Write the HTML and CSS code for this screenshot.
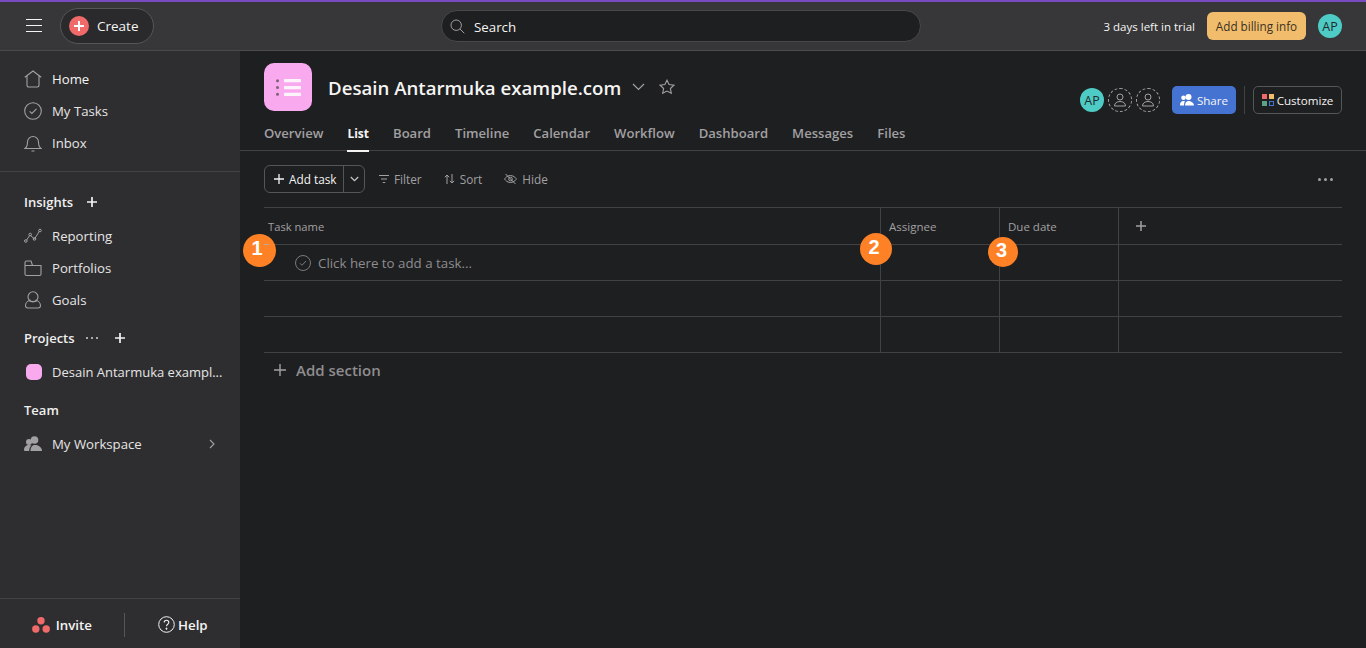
FILE: index.html
```html
<!DOCTYPE html>
<html lang="en">
<head>
<meta charset="utf-8">
<title>Desain Antarmuka example.com</title>
<link rel="stylesheet" href="styles.css">
</head>
<body>
<div class="app">
  <header class="topbar">
    <div class="top-left">
      <button class="burger" aria-label="Menu"><svg width="16" height="14" viewBox="0 0 16 14"><path d="M0 .5h16M0 6.500h16M0 12.500h16" stroke="#f5f4f3" fill="none"/></svg></button>
      <div class="create"><span class="create-dot"><svg width="10" height="10" viewBox="0 0 10 10"><path d="M5 0v10M0 5h10" stroke="#fff" stroke-width="2"/></svg></span><span>Create</span></div>
    </div>
    <div class="search">
      <svg width="15" height="15" viewBox="0 0 15 15" fill="none" stroke="#a2a0a2" stroke-width="1"><circle cx="6.200" cy="6.200" r="5.200"/><path d="M10 10l4.300 4.300"/></svg>
      <span>Search</span>
    </div>
    <div class="top-right">
      <span class="trial">3 days left in trial</span>
      <span class="billing">Add billing info</span>
      <span class="avatar">AP</span>
    </div>
  </header>
  <div class="body">
    <aside class="sidebar">
      <nav class="nav-main">
        <a class="nav-item"><svg class="ico" viewBox="0 0 18 18" fill="none" stroke="#a2a0a2" stroke-width="1.100"><path d="M.8 7.200 9 1l8.200 6.200M3 6v9.300a1.700 1.700 0 0 0 1.700 1.700h8.600a1.700 1.700 0 0 0 1.700-1.700V6"/></svg><span>Home</span></a>
        <a class="nav-item"><svg class="ico" viewBox="0 0 18 18" fill="none" stroke="#a2a0a2" stroke-width="1.100"><circle cx="9" cy="9" r="8.300"/><path d="M5.600 9.300 7.900 11.500 12.500 6.800"/></svg><span>My Tasks</span></a>
        <a class="nav-item"><svg class="ico" viewBox="0 0 18 18" fill="none" stroke="#a2a0a2" stroke-width="1.100"><path d="M1 14.500c2-1.500 2.500-3 2.500-6.500a5.500 5.500 0 0 1 11 0c0 3.500.5 5 2.500 6.500zM7.500 17h3"/></svg><span>Inbox</span></a>
      </nav>
      <div class="side-rule"></div>
      <div class="side-head first"><b>Insights</b><svg class="plus" width="10" height="10" viewBox="0 0 10 10"><path d="M5 0v10M0 5h10" stroke="#f5f4f3" stroke-width="1.700"/></svg></div>
      <a class="nav-item"><svg class="ico" viewBox="0 0 18 18" fill="none" stroke="#a2a0a2" stroke-width="1"><path d="M2.300 13.500 6 8l4.500 4L15.500 4"/><circle cx="1.800" cy="14" r="1.300"/><circle cx="6.200" cy="7.500" r="1.300"/><circle cx="10.500" cy="12" r="1.300"/><circle cx="16" cy="3.500" r="1.300"/></svg><span>Reporting</span></a>
      <a class="nav-item"><svg class="ico" viewBox="0 0 18 18" fill="none" stroke="#a2a0a2" stroke-width="1.100"><path d="M1 3.500V15a1.500 1.500 0 0 0 1.500 1.500h13A1.500 1.500 0 0 0 17 15V6.500H8.500L7 2H2.500A1.500 1.500 0 0 0 1 3.500zM1 6.500h8"/></svg><span>Portfolios</span></a>
      <a class="nav-item"><svg class="ico" viewBox="0 0 18 18" fill="none" stroke="#a2a0a2" stroke-width="1.100"><circle cx="9" cy="5.800" r="5"/><path d="M1.500 14.500c0-3 3-5 5-5.500M16.500 14.500c0-3-3-5-5-5.500M1.500 14.500a2.500 2.500 0 0 0 2.500 2.500h10a2.500 2.500 0 0 0 2.500-2.500M5 9.500c2 1.500 6 1.500 8 0"/></svg><span>Goals</span></a>
      <div class="side-head projects"><b>Projects</b><span class="dots" aria-hidden="true"><i></i><i></i><i></i></span><svg class="plus" width="10" height="10" viewBox="0 0 10 10"><path d="M5 0v10M0 5h10" stroke="#f5f4f3" stroke-width="1.700"/></svg></div>
      <a class="nav-item project"><span class="swatch"></span><span class="project-name">Desain Antarmuka exampl...</span></a>
      <div class="side-head team"><b>Team</b></div>
      <a class="nav-item workspace"><svg class="ico" viewBox="0 0 18 18" fill="#a2a0a2"><circle cx="10.500" cy="5" r="3.800"/><circle cx="5" cy="7" r="3"/><path d="M0 15c0-3 2.200-5 5-5 1 0 1.800.2 2.500.6-1.500 1.200-2.300 3-2.300 5.400H1a1 1 0 0 1-1-1zM6.500 16c0-3.500 1.800-6 4-6h1c3 0 6.500 2.500 6.500 6z"/></svg><span>My Workspace</span><svg class="chev" width="6" height="10" viewBox="0 0 6 10" fill="none" stroke="#a2a0a2" stroke-width="1.100"><path d="M1 1l4 4-4 4"/></svg></a>
      <div class="side-foot">
        <div class="invite"><svg width="18" height="16" viewBox="0 0 18 16" fill="#f06a6a"><circle cx="9" cy="3.800" r="3.700"/><circle cx="3.800" cy="12" r="3.700"/><circle cx="14.200" cy="12" r="3.700"/></svg><b>Invite</b></div>
        <div class="foot-sep"></div>
        <div class="help"><svg width="17" height="17" viewBox="0 0 17 17" fill="none" stroke="#f5f4f3"><circle cx="8.500" cy="8.500" r="7.800"/><path d="M6.200 6.500c0-3 4.600-3 4.600 0 0 1.800-2.300 1.800-2.300 3.800" stroke-width="1.100"/><circle cx="8.500" cy="12.700" r=".6" fill="#f5f4f3"/></svg><b>Help</b></div>
      </div>
    </aside>
    <main class="main">
      <div class="project-head">
        <div class="title-row">
          <div class="project-icon"><svg width="26" height="17" viewBox="0 0 26 17" fill="#fdf3fb"><circle cx="1.500" cy="1.800" r="1.500" fill="#7d6077"/><circle cx="1.500" cy="8.500" r="1.500" fill="#7d6077"/><circle cx="1.500" cy="15.200" r="1.500" fill="#7d6077"/><rect x="8" y="0" width="17" height="3.300" rx=".5"/><rect x="8" y="6.900" width="17" height="3.300" rx=".5"/><rect x="8" y="13.700" width="17" height="3.300" rx=".5"/></svg></div>
          <h1>Desain Antarmuka example.com</h1>
          <svg class="title-chev" width="13" height="8" viewBox="0 0 13 8" fill="none" stroke="#a2a0a2" stroke-width="1.200"><path d="M1 1l5.500 5.500L12 1"/></svg>
          <svg class="star" width="16" height="16" viewBox="0 0 16 16" fill="none" stroke="#a2a0a2" stroke-width="1.100"><path d="M8 1.200l2.100 4.400 4.800.6-3.500 3.300.9 4.800L8 12l-4.300 2.300.9-4.800L1.100 6.200l4.800-.6z"/></svg>
          <div class="head-actions">
            <span class="avatar">AP</span>
            <span class="ghost"><svg width="14" height="14" viewBox="0 0 14 14" fill="none" stroke="#a2a0a2"><circle cx="7" cy="4" r="3"/><path d="M1.500 13c0-3 2.500-4.500 5.500-4.500s5.500 1.500 5.500 4.500z"/></svg></span>
            <span class="ghost"><svg width="14" height="14" viewBox="0 0 14 14" fill="none" stroke="#a2a0a2"><circle cx="7" cy="4" r="3"/><path d="M1.500 13c0-3 2.500-4.500 5.500-4.500s5.500 1.500 5.500 4.500z"/></svg></span>
            <span class="share"><svg width="14" height="12" viewBox="0 0 14 12" fill="#fff"><circle cx="8.500" cy="3" r="3"/><circle cx="3.500" cy="3.800" r="2.300"/><path d="M0 11c0-2.500 1.500-4 3.500-4 .6 0 1 .1 1.500.3C4.300 8.300 4 9.500 4 11.500H.5a.5.500 0 0 1-.5-.5zM5 11.500c0-2.800 1.500-4.500 3.500-4.500s5.500 1.700 5.500 4.500z"/></svg>Share</span>
            <span class="vsep"></span>
            <span class="customize"><svg width="12" height="12" viewBox="0 0 12 12"><rect width="5" height="5" fill="#f06a6a"/><rect x="7" width="5" height="5" fill="#f1bd6c"/><rect y="7" width="5" height="5" fill="#5da283"/><rect x="7.500" y="7.500" width="4" height="4" fill="none" stroke="#4573d2"/></svg>Customize</span>
          </div>
        </div>
        <nav class="tabs">
          <a>Overview</a><a class="active">List</a><a>Board</a><a>Timeline</a><a>Calendar</a><a>Workflow</a><a>Dashboard</a><a>Messages</a><a>Files</a>
        </nav>
      </div>
      <div class="toolbar">
        <div class="add-task">
          <span class="add-main"><svg width="10" height="10" viewBox="0 0 10 10"><path d="M5 0v10M0 5h10" stroke="#f5f4f3" stroke-width="1.300"/></svg>Add task</span>
          <span class="add-drop"><svg width="9" height="6" viewBox="0 0 9 6" fill="none" stroke="#c9c8c9" stroke-width="1.200"><path d="M.8 1l3.700 3.700L8.200 1"/></svg></span>
        </div>
        <span class="tool"><svg width="10" height="8" viewBox="0 0 10 8" stroke="#a2a0a2"><path d="M0 .5h10M2 4h6M3.800 7.500h2.400"/></svg>Filter</span>
        <span class="tool"><svg width="11" height="10" viewBox="0 0 11 10" fill="none" stroke="#a2a0a2"><path d="M3 10V1M.8 3.200 3 1l2.200 2.200M8 0v9M5.800 6.800 8 9l2.200-2.200"/></svg>Sort</span>
        <span class="tool"><svg width="13" height="12" viewBox="0 0 13 12" fill="none" stroke="#a2a0a2"><path d="M.5 6S2.800 2.500 6.500 2.500 12.500 6 12.500 6 10.200 9.500 6.500 9.500.5 6 .5 6zM1.500 1l10 10"/><circle cx="6.500" cy="6" r="1.800"/></svg>Hide</span>
        <span class="more"><i></i><i></i><i></i></span>
      </div>
      <div class="grid">
        <div class="row header">
          <div class="cell name">Task name</div><div class="cell">Assignee</div><div class="cell">Due date</div>
          <div class="cell add-col"><svg width="10" height="10" viewBox="0 0 10 10"><path d="M5 0v10M0 5h10" stroke="#a2a0a2" stroke-width="1.500"/></svg></div>
        </div>
        <div class="row">
          <div class="cell name new-task"><svg width="16" height="16" viewBox="0 0 16 16" fill="none" stroke="#7b797b"><circle cx="8" cy="8" r="7.500"/><path d="M5 8.300l2 2 4-4.300"/></svg><span>Click here to add a task...</span></div><div class="cell"></div><div class="cell"></div><div class="cell"></div>
        </div>
        <div class="row"><div class="cell name"></div><div class="cell"></div><div class="cell"></div><div class="cell"></div></div>
        <div class="row"><div class="cell name"></div><div class="cell"></div><div class="cell"></div><div class="cell"></div></div>
      </div>
      <div class="add-section"><svg width="12" height="12" viewBox="0 0 12 12"><path d="M6 0v12M0 6h12" stroke="#a2a0a2" stroke-width="1.400"/></svg><span>Add section</span></div>
      <span class="marker m1">1<i class="dash"></i></span>
      <span class="marker m2">2</span>
      <span class="marker m3">3</span>
    </main>
  </div>
</div>
</body>
</html>
```

FILE: styles.css
```css
* { box-sizing: border-box; }
html, body { margin: 0; height: 100%; }
body {
  font-family: "Open Sans", "Noto Sans", "Liberation Sans", sans-serif;
  font-size: 13px;
  color: #f5f4f3;
  background: #1e1f21;
  overflow: hidden;
}
.app { height: 648px; display: flex; flex-direction: column; }
button { background: none; border: 0; padding: 0; color: inherit; display: flex; }

.topbar {
  height: 51px;
  flex: none;
  background: #373739;
  border-top: 2px solid #7a4bc0;
  border-bottom: 1px solid #4a4a4c;
  display: grid;
  grid-template-columns: 1fr 480px 1fr;
  align-items: center;
  padding: 0 24px 0 26px;
}
.top-left { display: flex; align-items: center; gap: 18px; }
.create {
  width: 94px; height: 36px;
  border: 1px solid #565557;
  border-radius: 18px;
  background: #2a2a2c;
  display: flex; align-items: center; gap: 8px;
  padding-left: 8px;
  font-size: 13.500px;
}
.create-dot { width: 20px; height: 20px; border-radius: 50%; background: #f06a6a; display: flex; align-items: center; justify-content: center; }
.search {
  height: 32px;
  width: 480px;
  margin-left: -3px;
  border: 1px solid #48484a;
  border-radius: 16px;
  background: #1e1f21;
  display: flex; align-items: center; gap: 9px;
  padding: 0 0 0 8px;
  font-size: 13.300px;
}
.search span { position: relative; top: 1px; }
.top-right { display: flex; align-items: center; justify-content: flex-end; }
.trial { font-size: 11.500px; margin-right: 12px; }
.billing {
  height: 28px; width: 99px;
  border-radius: 6px;
  background: #f1bd6c;
  color: #3a3123;
  font-size: 11.700px;
  display: flex; align-items: center; justify-content: center;
  margin-right: 12px;
}
.avatar {
  width: 24px; height: 24px;
  flex: none;
  border-radius: 50%;
  background: #4ecbc4;
  color: #1e2a2c;
  font-size: 12.500px;
  display: flex; align-items: center; justify-content: center;
}

.body { flex: 1; display: flex; min-height: 0; position: relative; }
.sidebar {
  width: 240px; flex: none;
  background: #2e2e30;
  display: flex; flex-direction: column;
  padding-top: 12px;
}
.nav-item {
  height: 32px;
  padding: 0 12px 0 24px;
  display: flex; align-items: center; gap: 10px;
  font-size: 13.200px;
  color: #e6e5e5;
}
.nav-main .nav-item:first-child span { color: #f5f4f3; }
.ico { width: 18px; height: 18px; flex: none; }
.side-rule { height: 1px; background: #424244; margin-top: 12px; }
.side-head {
  height: 20px;
  padding-left: 24px;
  display: flex; align-items: center;
  font-size: 13px;
}
.side-head b { font-weight: 600; color: #f0efef; }
.side-head.first { margin-top: 20px; margin-bottom: 8px; gap: 14px; }
.side-head.projects { margin-top: 12px; margin-bottom: 8px; }
.side-head.projects .dots { margin-left: 11px; display: flex; gap: 3px; }
.dots i { width: 2px; height: 2px; background: #d5d4d5; border-radius: 50%; }
.side-head.projects .plus { margin-left: 17px; }
.side-head.team { margin-top: 12px; margin-bottom: 8px; }
.swatch { width: 16px; height: 16px; margin-left: 2px; border-radius: 5px; background: #f9aaef; flex: none; }
.project-name { font-size: 13px; white-space: nowrap; }
.workspace span { flex: 1; }
.chev { margin-right: 13px; }
.side-foot {
  margin-top: auto;
  height: 50px;
  padding-top: 2px;
  border-top: 1px solid #424244;
  display: flex; align-items: center;
  font-size: 13.300px;
}
.side-foot b { font-weight: 600; }
.invite { width: 124px; display: flex; align-items: center; justify-content: flex-end; gap: 6px; padding-right: 32px; }
.foot-sep { width: 1px; height: 24px; background: #565557; flex: none; }
.help { flex: 1; display: flex; align-items: center; gap: 3px; padding-left: 33px; }

.main { flex: 1; min-width: 0; position: relative; padding: 0 24px; }
.project-head { margin: 0 -24px; padding: 12px 24px 0; border-bottom: 1px solid #424244; height: 100px; }
.title-row { display: flex; align-items: center; height: 48px; }
.project-icon {
  width: 48px; height: 48px;
  border-radius: 10px;
  background: #f9aaef;
  display: flex; align-items: center; justify-content: center;
  padding-left: 1px;
  flex: none;
}
h1 { margin: 2px 0 0 16px; font-size: 18.650px; font-weight: 600; line-height: 1; white-space: nowrap; }
.title-chev { margin-left: 11px; }
.star { margin-left: 14px; }
.head-actions { margin-left: auto; display: flex; align-items: center; margin-top: 26px; }
.ghost {
  width: 24px; height: 24px;
  margin-left: 4px;
  border-radius: 50%;
  border: 1px dashed #a2a0a2;
  display: flex; align-items: center; justify-content: center;
}
.share {
  width: 64px; height: 28px;
  margin-left: 12px;
  background: #4573d2;
  border-radius: 5px;
  display: flex; align-items: center; justify-content: center; gap: 3px;
  font-size: 11.600px;
}
.vsep { width: 1px; height: 28px; background: #424244; margin: 0 8px; }
.customize {
  width: 89px; height: 28px;
  border: 1px solid #565557;
  border-radius: 5px;
  display: flex; align-items: center; justify-content: center; gap: 3px;
  font-size: 11.600px;
}
.tabs { display: flex; gap: 24px; margin-top: 8px; height: 32px; }
.tabs a { font-size: 13.100px; font-weight: 600; color: #a2a0a2; height: 32px; line-height: 29px; white-space: nowrap; }
.tabs a.active { color: #f5f4f3; border-bottom: 2px solid #f5f4f3; height: 33px; font-weight: 700; font-size: 12px; }

.toolbar { height: 56px; display: flex; align-items: center; }
.add-task {
  display: flex; height: 28px;
  border: 1px solid #565557;
  border-radius: 6px;
  font-size: 11.800px;
}
.add-main { width: 79px; display: flex; align-items: center; gap: 5px; padding-left: 9px; border-right: 1px solid #565557; }
.add-drop { width: 20px; display: flex; align-items: center; justify-content: center; }
.tool { display: flex; align-items: center; gap: 5px; font-size: 11.800px; color: #a2a0a2; font-weight: 500; margin-left: 14px; white-space: nowrap; }
.tool + .tool { margin-left: 22px; }
.more { margin-left: auto; margin-right: 9px; display: flex; gap: 3px; }
.more i { width: 3px; height: 3px; border-radius: 50%; background: #a2a0a2; }

.grid { border-top: 1px solid #424244; }
.row {
  display: grid;
  grid-template-columns: 617px 119px 119px 1fr;
  height: 36px;
  border-bottom: 1px solid #424244;
}
.cell { border-right: 1px solid #424244; display: flex; align-items: center; padding-left: 8px; font-size: 11.500px; color: #a2a0a2; }
.cell:last-child { border-right: 0; }
.cell.name { padding-left: 4px; font-size: 11.200px; }
.row.header { height: 37px; }
.add-col { padding-left: 17px; }
.cell.new-task { gap: 7px; font-size: 13.300px; padding-left: 31px; color: #8f8d8f; }
.add-section { height: 33px; display: flex; align-items: center; gap: 10px; padding-left: 10px; font-size: 15px; font-weight: 600; color: #8f8d8f; }

.marker {
  position: absolute;
  border-radius: 50%;
  background: #ff8125;
  color: #fff;
  font-family: "Liberation Sans", sans-serif;
  font-weight: 700;
  font-size: 20px;
  display: flex; align-items: center; justify-content: center;
}
.m1 { left: 3px; top: 183px; width: 33px; height: 33px; padding: 0 5px 5px 0; }
.m2 { left: 620px; top: 182px; width: 32px; height: 32px; padding: 0 4px 4px 0; }
.m3 { left: 748px; top: 186px; width: 30px; height: 30px; padding: 0 3px 4px 0; }
.dash { position: absolute; left: 21px; top: 10px; width: 5px; height: 1px; background: #b8aca2; }
```
